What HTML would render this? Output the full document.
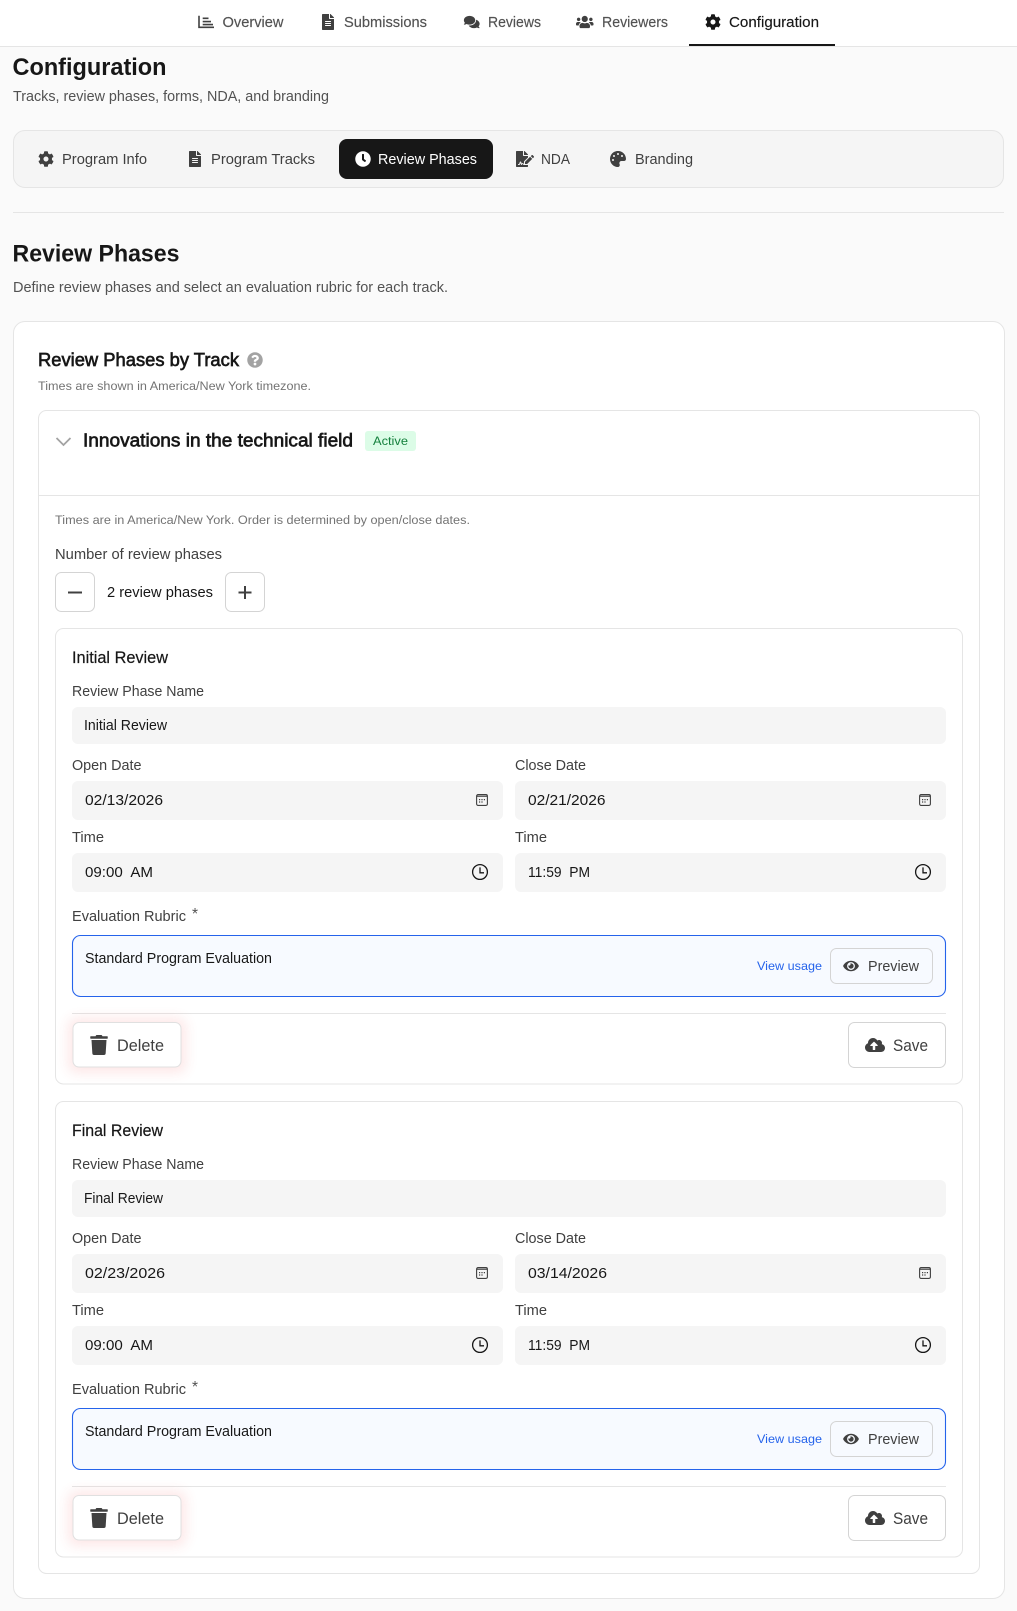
<!DOCTYPE html>
<html lang="en"><head><meta charset="utf-8"><title>Configuration</title>
<style>
html,body{margin:0;padding:0;background:#fafafa;width:1017px;height:1611px;overflow:hidden}
svg{display:block}
text{font-family:"Liberation Sans",Arial,sans-serif;font-size:14.4px;fill:#404040;white-space:pre}
.nav{fill:#525252;stroke:#525252;stroke-width:.15}
.dark{fill:#171717}
.h1{font-size:24.5px;font-weight:700;fill:#171717}
.sub{fill:#525252}
.small{font-size:12.3px;fill:#737373}
.h3{font-size:18.4px;fill:#171717;stroke:#171717;stroke-width:.65}
.ph{font-size:16.4px;fill:#171717;stroke:#171717;stroke-width:.2}
.btn{font-size:16.4px;fill:#404040}
.ic{fill:#404040}
.box{fill:#f5f5f5}
.line{stroke:#e5e5e5;stroke-width:1}
.bd{fill:#fff;stroke:#e5e5e5;stroke-width:1}
.btnb{fill:#fff;stroke:#d4d4d4;stroke-width:1}
.glow{fill:#ef4444;opacity:.12;filter:blur(6px)}
</style></head><body>
<svg width="1017" height="1611" viewBox="0 0 1017 1611" xmlns="http://www.w3.org/2000/svg">
<defs>
<path id="gear" d="M487.4 315.7l-42.6-24.6c4.3-23.2 4.3-47 0-70.2l42.6-24.6c4.9-2.8 7.1-8.6 5.5-14-11.1-35.6-30-67.8-54.7-94.6-3.8-4.1-10-5.1-14.8-2.3L380.8 110c-17.9-15.4-38.5-27.3-60.8-35.1V25.8c0-5.6-3.9-10.5-9.4-11.7-36.7-8.2-74.3-7.8-109.2 0-5.5 1.2-9.4 6.1-9.4 11.7V75c-22.2 7.9-42.8 19.8-60.8 35.1L88.7 85.5c-4.9-2.8-11-1.9-14.8 2.3-24.7 26.7-43.6 58.9-54.7 94.6-1.7 5.4.6 11.2 5.5 14L67.3 221c-4.3 23.2-4.3 47 0 70.2l-42.6 24.6c-4.9 2.8-7.1 8.6-5.5 14 11.1 35.6 30 67.8 54.7 94.6 3.8 4.1 10 5.1 14.8 2.3l42.6-24.6c17.9 15.4 38.5 27.3 60.8 35.1v49.2c0 5.6 3.9 10.5 9.4 11.7 36.7 8.2 74.3 7.8 109.2 0 5.5-1.2 9.4-6.1 9.4-11.7v-49.2c22.2-7.9 42.8-19.8 60.8-35.1l42.6 24.6c4.9 2.8 11 1.9 14.8-2.3 24.7-26.7 43.6-58.9 54.7-94.6 1.5-5.5-.7-11.3-5.6-14.1zM256 336c-44.1 0-80-35.9-80-80s35.9-80 80-80 80 35.9 80 80-35.9 80-80 80z"/>
<path id="file" d="M224 136V0H24C10.7 0 0 10.7 0 24v464c0 13.3 10.7 24 24 24h336c13.3 0 24-10.7 24-24V160H248c-13.2 0-24-10.8-24-24zm64 236c0 6.6-5.4 12-12 12H108c-6.6 0-12-5.4-12-12v-8c0-6.6 5.4-12 12-12h168c6.6 0 12 5.4 12 12v8zm0-64c0 6.6-5.4 12-12 12H108c-6.6 0-12-5.4-12-12v-8c0-6.6 5.4-12 12-12h168c6.6 0 12 5.4 12 12v8zm0-72v8c0 6.6-5.4 12-12 12H108c-6.6 0-12-5.4-12-12v-8c0-6.6 5.4-12 12-12h168c6.6 0 12 5.4 12 12zm96-114.1v6.1H256V0h6.1c6.4 0 12.5 2.5 17 7l97.9 98c4.5 4.5 7 10.6 7 16.9z"/>
<path id="trash" d="M432 32H312l-9.4-18.7A24 24 0 0 0 281.1 0H166.8a23.72 23.72 0 0 0-21.4 13.3L136 32H16A16 16 0 0 0 0 48v32a16 16 0 0 0 16 16h416a16 16 0 0 0 16-16V48a16 16 0 0 0-16-16zM53.2 467a48 48 0 0 0 47.9 45h245.8a48 48 0 0 0 47.9-45L416 128H32z"/>
<path id="eye" d="M572.52 241.4C518.29 135.59 410.93 64 288 64S57.68 135.64 3.48 241.41a32.35 32.35 0 0 0 0 29.19C57.71 376.41 165.07 448 288 448s230.32-71.64 284.52-177.41a32.35 32.35 0 0 0 0-29.19zM288 400a144 144 0 1 1 144-144 143.93 143.93 0 0 1-144 144zm0-240a95.31 95.31 0 0 0-25.31 3.79 47.85 47.85 0 0 1-66.9 66.9A95.78 95.78 0 1 0 288 160z"/>
<path id="cloud" d="M537.6 226.6c4.1-10.7 6.4-22.4 6.4-34.6 0-53-43-96-96-96-19.7 0-38.1 6-53.3 16.2C367 64.2 315.3 32 256 32c-88.4 0-160 71.6-160 160 0 2.7.1 5.4.2 8.1C40.2 219.8 0 273.2 0 336c0 79.5 64.5 144 144 144h368c70.7 0 128-57.3 128-128 0-61.9-44-113.6-102.4-125.4zM393.4 288H328v112c0 8.8-7.2 16-16 16h-48c-8.8 0-16-7.2-16-16V288h-65.4c-14.3 0-21.4-17.2-11.3-27.3l105.4-105.4c6.2-6.2 16.4-6.2 22.6 0l105.4 105.4c10.1 10.1 2.9 27.3-11.3 27.3z"/>
<g id="cal"><rect x="0.6" y="0.6" width="10.8" height="10.8" rx="1.5" fill="none" stroke="#404040" stroke-width="1.1"/><rect x="1" y="1.6" width="10" height="1.2" fill="#404040"/><path d="M3 5h1.2v1.2H3zM5.4 5h1.2v1.2H5.4zM7.8 5h1.2v1.2H7.8zM3 7.4h1.2v1.2H3zM5.4 7.4h1.2v1.2H5.4z" fill="#404040"/></g>
<g id="clk"><circle cx="0" cy="0" r="7.4" fill="none" stroke="#171717" stroke-width="1.3"/><path d="M0-4.6V.8H4" fill="none" stroke="#171717" stroke-width="1.3"/></g>
</defs>

<!-- top nav -->
<rect width="1017" height="46" fill="#fff"/>
<line x1="0" x2="1017" y1="46.5" y2="46.5" class="line"/>
<rect x="689" y="44" width="146" height="2" fill="#171717"/>
<path d="M199 15.7V27.3H214M202.7 18.3H208.5M202.7 21.6H211M202.7 24.6H213" fill="none" stroke="#404040" stroke-width="1.6"/>
<text class="nav" x="222.5" y="27" textLength="61" lengthAdjust="spacingAndGlyphs">Overview</text>
<svg x="322" y="14" width="12" height="16" viewBox="0 0 384 512"><use href="#file" class="ic"/></svg>
<text class="nav" x="344" y="27" textLength="83" lengthAdjust="spacingAndGlyphs">Submissions</text>
<svg x="463" y="15" width="17.5" height="14" viewBox="0 0 576 512"><path class="ic" d="M416 192c0-88.4-93.1-160-208-160S0 103.6 0 192c0 34.3 14.1 65.9 38 92-13.4 30.2-35.5 54.2-35.8 54.5-2.2 2.3-2.8 5.7-1.5 8.7S4.8 352 8 352c36.6 0 66.9-12.3 88.7-25 32.2 15.7 70.3 25 111.3 25 114.9 0 208-71.6 208-160zm122 220c23.9-26 38-57.7 38-92 0-66.9-53.5-124.2-129.3-148.1.9 6.6 1.3 13.3 1.3 20.1 0 105.9-107.7 192-240 192-10.8 0-21.3-.8-31.7-1.9C207.8 439.6 281.8 480 368 480c41 0 79.1-9.2 111.3-25 21.8 12.7 52.1 25 88.7 25 3.2 0 6.1-1.9 7.3-4.8 1.3-2.9.7-6.3-1.5-8.7-.3-.3-22.4-24.2-35.8-54.5z"/></svg>
<text class="nav" x="488" y="27" textLength="53" lengthAdjust="spacingAndGlyphs">Reviews</text>
<svg x="576" y="15" width="17.5" height="14" viewBox="0 0 640 512"><path class="ic" d="M96 224c35.3 0 64-28.7 64-64s-28.7-64-64-64-64 28.7-64 64 28.7 64 64 64zm448 0c35.3 0 64-28.7 64-64s-28.7-64-64-64-64 28.7-64 64 28.7 64 64 64zm32 32h-64c-17.6 0-33.5 7.1-45.1 18.6 40.3 22.1 68.9 62 75.1 109.4h66c17.7 0 32-14.3 32-32v-32c0-35.3-28.7-64-64-64zm-256 0c61.9 0 112-50.1 112-112S381.9 32 320 32 208 82.1 208 144s50.1 112 112 112zm76.8 32h-8.3c-20.8 10-43.9 16-68.5 16s-47.6-6-68.5-16h-8.3C179.6 288 128 339.6 128 403.2V432c0 26.5 21.5 48 48 48h288c26.5 0 48-21.5 48-48v-28.8c0-63.6-51.6-115.2-115.2-115.2zm-223.7-13.4C161.5 263.1 145.6 256 128 256H64c-35.3 0-64 28.7-64 64v32c0 17.7 14.3 32 32 32h65.9c6.3-47.4 34.9-87.3 75.2-109.4z"/></svg>
<text class="nav" x="602" y="27" textLength="66" lengthAdjust="spacingAndGlyphs">Reviewers</text>
<svg x="705" y="14" width="16" height="16" viewBox="0 0 512 512"><use href="#gear" fill="#171717"/></svg>
<text class="nav" style="fill:#171717;stroke:#171717" x="729" y="27" textLength="90" lengthAdjust="spacingAndGlyphs">Configuration</text>

<!-- page head -->
<text class="h1" x="12.5" y="75" textLength="154" lengthAdjust="spacingAndGlyphs">Configuration</text>
<text class="sub" x="13" y="101" textLength="316" lengthAdjust="spacingAndGlyphs">Tracks, review phases, forms, NDA, and branding</text>

<!-- tabs -->
<rect x="13.5" y="130.5" width="990" height="57" rx="11.5" fill="#f5f5f5" stroke="#e5e5e5"/>
<rect x="339" y="139" width="154" height="40" rx="8" fill="#171717"/>
<svg x="38" y="151" width="16" height="16" viewBox="0 0 512 512"><use href="#gear" class="ic"/></svg>
<text x="62" y="164" textLength="85" lengthAdjust="spacingAndGlyphs">Program Info</text>
<svg x="189" y="151" width="12" height="16" viewBox="0 0 384 512"><use href="#file" class="ic"/></svg>
<text x="211" y="164" textLength="104" lengthAdjust="spacingAndGlyphs">Program Tracks</text>
<svg x="355" y="151" width="16" height="16" viewBox="0 0 512 512"><path fill="#fff" d="M256,8C119,8,8,119,8,256S119,504,256,504,504,393,504,256,393,8,256,8Zm92.49,313h0l-20,25a16,16,0,0,1-22.49,2.5h0l-67-49.72a40,40,0,0,1-15-31.23V112a16,16,0,0,1,16-16h32a16,16,0,0,1,16,16V256l58,42.5A16,16,0,0,1,348.49,321Z"/></svg>
<text style="fill:#fff" x="378" y="164" textLength="99" lengthAdjust="spacingAndGlyphs">Review Phases</text>
<svg x="516" y="151" width="18" height="16" viewBox="0 0 576 512"><path class="ic" d="M218.17 424.14c-2.95-5.92-8.09-6.52-10.17-6.52s-7.22.59-10.02 6.19l-7.67 15.34c-6.37 12.78-25.03 11.37-29.48-2.09L144 386.59l-10.61 31.88c-5.89 17.66-22.38 29.53-41 29.53H80c-8.84 0-16-7.16-16-16s7.16-16 16-16h12.39c4.83 0 9.11-3.08 10.64-7.66l18.19-54.64c3.3-9.81 12.44-16.41 22.78-16.41s19.48 6.59 22.77 16.41l13.88 41.64c19.75-16.19 54.06-9.7 66 14.16 1.89 3.78 5.49 5.95 9.36 6.26v-82.12l128-127.09V160H248c-13.2 0-24-10.8-24-24V0H24C10.7 0 0 10.7 0 24v464c0 13.3 10.7 24 24 24h336c13.3 0 24-10.7 24-24v-40l-128-.11c-16.12-.31-30.58-9.28-37.83-23.75zM384 121.9c0-6.3-2.5-12.4-7-16.9L279.1 7c-4.5-4.5-10.6-7-17-7H256v128h128v-6.1zm-96 225.06V416h68.99l161.68-162.78-67.88-67.88L288 346.96zm280.54-179.63l-31.87-31.87c-9.94-9.94-26.07-9.94-36.01 0l-27.25 27.25 67.88 67.88 27.25-27.25c9.95-9.94 9.95-26.07 0-36.01z"/></svg>
<text x="541" y="164" textLength="29" lengthAdjust="spacingAndGlyphs">NDA</text>
<svg x="610" y="151" width="16" height="16" viewBox="0 0 512 512"><path class="ic" d="M204.3 5C104.9 24.4 24.8 104.3 5.2 203.4c-37 187 131.7 326.4 258.8 306.7 41.2-6.4 61.4-54.6 42.5-91.7-23.1-45.4 9.9-98.4 60.9-98.4h79.7c35.8 0 64.8-29.6 64.9-65.3C511.5 97.1 368.1-26.9 204.3 5zM96 320c-17.7 0-32-14.3-32-32s14.3-32 32-32 32 14.3 32 32-14.3 32-32 32zm32-128c-17.7 0-32-14.3-32-32s14.3-32 32-32 32 14.3 32 32-14.3 32-32 32zm128-64c-17.7 0-32-14.3-32-32s14.3-32 32-32 32 14.3 32 32-14.3 32-32 32zm128 64c-17.7 0-32-14.3-32-32s14.3-32 32-32 32 14.3 32 32-14.3 32-32 32z"/></svg>
<text x="635" y="164" textLength="58" lengthAdjust="spacingAndGlyphs">Branding</text>

<line x1="13" x2="1004" y1="212.5" y2="212.5" class="line"/>

<text class="h1" x="12.5" y="261.5" textLength="167" lengthAdjust="spacingAndGlyphs">Review Phases</text>
<text class="sub" x="13" y="292" textLength="435" lengthAdjust="spacingAndGlyphs">Define review phases and select an evaluation rubric for each track.</text>

<!-- main card -->
<rect x="13.5" y="321.5" width="991" height="1277" rx="11.5" class="bd"/>
<text class="h3" x="38" y="366" textLength="201" lengthAdjust="spacingAndGlyphs">Review Phases by Track</text>
<svg x="247" y="352" width="16" height="16" viewBox="0 0 512 512"><path fill="#a3a3a3" d="M504 256c0 136.997-111.043 248-248 248S8 392.997 8 256C8 119.083 119.043 8 256 8s248 111.083 248 248zM262.655 90c-54.497 0-89.255 22.957-116.549 63.758-3.536 5.286-2.353 12.415 2.715 16.258l34.699 26.31c5.205 3.947 12.621 3.008 16.665-2.122 17.864-22.658 30.113-35.797 57.303-35.797 20.429 0 45.698 13.148 45.698 32.958 0 14.976-12.363 22.667-32.534 33.976C247.128 238.528 216 254.941 216 296v4c0 6.627 5.373 12 12 12h56c6.627 0 12-5.373 12-12v-1.333c0-28.462 83.186-29.647 83.186-106.667 0-58.002-60.165-102-116.531-102zM256 338c-25.365 0-46 20.635-46 46 0 25.364 20.635 46 46 46s46-20.636 46-46c0-25.365-20.635-46-46-46z"/></svg>
<text class="small" x="38" y="390" textLength="273" lengthAdjust="spacingAndGlyphs">Times are shown in America/New York timezone.</text>

<!-- track box -->
<rect x="38.5" y="410.5" width="941" height="1163" rx="8" class="bd"/>
<path d="M56.5 438L63.5 445L70.5 438" fill="none" stroke="#a3a3a3" stroke-width="1.8"/>
<text class="h3" x="83" y="446.5" textLength="270" lengthAdjust="spacingAndGlyphs">Innovations in the technical field</text>
<rect x="365" y="431" width="51" height="20" rx="3" fill="#dcfce7"/>
<text style="font-size:12.3px;fill:#15803d" x="373" y="445" textLength="35" lengthAdjust="spacingAndGlyphs">Active</text>
<line x1="39" x2="979" y1="495.5" y2="495.5" class="line"/>
<text class="small" x="55" y="524" textLength="415" lengthAdjust="spacingAndGlyphs">Times are in America/New York. Order is determined by open/close dates.</text>
<text x="55" y="559" textLength="167" lengthAdjust="spacingAndGlyphs">Number of review phases</text>
<rect x="55.5" y="572.5" width="39" height="39" rx="6" class="btnb"/>
<path d="M68 592.5H82" stroke="#404040" stroke-width="2"/>
<text class="dark" x="107" y="597" textLength="106" lengthAdjust="spacingAndGlyphs">2 review phases</text>
<rect x="225.5" y="572.5" width="39" height="39" rx="6" class="btnb"/>
<path d="M238.5 592.5H251.5M245 586V599" stroke="#404040" stroke-width="2"/>

<!-- phase 1 -->
<g>
<rect x="55.5" y="628.5" width="907" height="455.5" rx="8" class="bd"/>
<text class="ph" x="72" y="663" textLength="96" lengthAdjust="spacingAndGlyphs">Initial Review</text>
<text x="72" y="696" textLength="132" lengthAdjust="spacingAndGlyphs">Review Phase Name</text>
<rect x="72" y="707" width="874" height="37" rx="6" class="box"/>
<text class="dark" x="84" y="730" textLength="83" lengthAdjust="spacingAndGlyphs">Initial Review</text>
<text x="72" y="770" textLength="69.5" lengthAdjust="spacingAndGlyphs">Open Date</text>
<rect x="72" y="781" width="431" height="39" rx="6" class="box"/>
<text class="dark" x="85" y="805" textLength="78" lengthAdjust="spacingAndGlyphs">02/13/2026</text>
<use href="#cal" x="476" y="794"/>
<text x="515" y="770" textLength="71" lengthAdjust="spacingAndGlyphs">Close Date</text>
<rect x="515" y="781" width="431" height="39" rx="6" class="box"/>
<text class="dark" x="528" y="805" textLength="77.5" lengthAdjust="spacingAndGlyphs">02/21/2026</text>
<use href="#cal" x="919" y="794"/>
<text x="72" y="842" textLength="32" lengthAdjust="spacingAndGlyphs">Time</text>
<rect x="72" y="853" width="431" height="39" rx="6" class="box"/>
<text class="dark" x="85" y="877" textLength="68" lengthAdjust="spacingAndGlyphs">09:00  AM</text>
<use href="#clk" x="480" y="872"/>
<text x="515" y="842" textLength="32" lengthAdjust="spacingAndGlyphs">Time</text>
<rect x="515" y="853" width="431" height="39" rx="6" class="box"/>
<text class="dark" x="528" y="877" textLength="62" lengthAdjust="spacingAndGlyphs">11:59  PM</text>
<use href="#clk" x="923" y="872"/>
<text x="72" y="921" textLength="114" lengthAdjust="spacingAndGlyphs">Evaluation Rubric</text>
<text style="fill:#525252;font-size:15.5px" x="192" y="919">*</text>
<rect x="72.5" y="935.5" width="873" height="61" rx="8" fill="#f7faff" stroke="#2563eb" stroke-width="1.1"/>
<text class="dark" x="85" y="963" textLength="187" lengthAdjust="spacingAndGlyphs">Standard Program Evaluation</text>
<text style="font-size:12.3px;fill:#2563eb" x="757" y="970" textLength="65" lengthAdjust="spacingAndGlyphs">View usage</text>
<rect x="830.5" y="948.5" width="102" height="35" rx="6" fill="#f7faff" stroke="#d4d4d4"/>
<svg x="843" y="959" width="16" height="14" viewBox="0 0 576 512"><use href="#eye" class="ic"/></svg>
<text x="868" y="971" textLength="51" lengthAdjust="spacingAndGlyphs">Preview</text>
<line x1="72" x2="946" y1="1013.5" y2="1013.5" class="line"/>
<rect x="68" y="1018" width="118" height="55" rx="8" class="glow"/>
<rect x="73" y="1022.5" width="108" height="44.5" rx="6" fill="#fff" stroke="#e0e0e0"/>
<svg x="90" y="1035" width="18" height="20" viewBox="0 0 448 512"><use href="#trash" class="ic"/></svg>
<text class="btn" x="117" y="1051" textLength="47" lengthAdjust="spacingAndGlyphs">Delete</text>
<rect x="848.5" y="1022.5" width="97" height="45" rx="6" class="btnb"/>
<svg x="865" y="1037" width="20" height="16" viewBox="0 0 640 512"><use href="#cloud" class="ic"/></svg>
<text class="btn" x="893" y="1051" textLength="35" lengthAdjust="spacingAndGlyphs">Save</text>
</g>

<!-- phase 2 -->
<g transform="translate(0,473)">
<rect x="55.5" y="628.5" width="907" height="455.5" rx="8" class="bd"/>
<text class="ph" x="72" y="663" textLength="91" lengthAdjust="spacingAndGlyphs">Final Review</text>
<text x="72" y="696" textLength="132" lengthAdjust="spacingAndGlyphs">Review Phase Name</text>
<rect x="72" y="707" width="874" height="37" rx="6" class="box"/>
<text class="dark" x="84" y="730" textLength="79" lengthAdjust="spacingAndGlyphs">Final Review</text>
<text x="72" y="770" textLength="69.5" lengthAdjust="spacingAndGlyphs">Open Date</text>
<rect x="72" y="781" width="431" height="39" rx="6" class="box"/>
<text class="dark" x="85" y="805" textLength="80" lengthAdjust="spacingAndGlyphs">02/23/2026</text>
<use href="#cal" x="476" y="794"/>
<text x="515" y="770" textLength="71" lengthAdjust="spacingAndGlyphs">Close Date</text>
<rect x="515" y="781" width="431" height="39" rx="6" class="box"/>
<text class="dark" x="528" y="805" textLength="79" lengthAdjust="spacingAndGlyphs">03/14/2026</text>
<use href="#cal" x="919" y="794"/>
<text x="72" y="842" textLength="32" lengthAdjust="spacingAndGlyphs">Time</text>
<rect x="72" y="853" width="431" height="39" rx="6" class="box"/>
<text class="dark" x="85" y="877" textLength="68" lengthAdjust="spacingAndGlyphs">09:00  AM</text>
<use href="#clk" x="480" y="872"/>
<text x="515" y="842" textLength="32" lengthAdjust="spacingAndGlyphs">Time</text>
<rect x="515" y="853" width="431" height="39" rx="6" class="box"/>
<text class="dark" x="528" y="877" textLength="62" lengthAdjust="spacingAndGlyphs">11:59  PM</text>
<use href="#clk" x="923" y="872"/>
<text x="72" y="921" textLength="114" lengthAdjust="spacingAndGlyphs">Evaluation Rubric</text>
<text style="fill:#525252;font-size:15.5px" x="192" y="919">*</text>
<rect x="72.5" y="935.5" width="873" height="61" rx="8" fill="#f7faff" stroke="#2563eb" stroke-width="1.1"/>
<text class="dark" x="85" y="963" textLength="187" lengthAdjust="spacingAndGlyphs">Standard Program Evaluation</text>
<text style="font-size:12.3px;fill:#2563eb" x="757" y="970" textLength="65" lengthAdjust="spacingAndGlyphs">View usage</text>
<rect x="830.5" y="948.5" width="102" height="35" rx="6" fill="#f7faff" stroke="#d4d4d4"/>
<svg x="843" y="959" width="16" height="14" viewBox="0 0 576 512"><use href="#eye" class="ic"/></svg>
<text x="868" y="971" textLength="51" lengthAdjust="spacingAndGlyphs">Preview</text>
<line x1="72" x2="946" y1="1013.5" y2="1013.5" class="line"/>
<rect x="68" y="1018" width="118" height="55" rx="8" class="glow"/>
<rect x="73" y="1022.5" width="108" height="44.5" rx="6" fill="#fff" stroke="#e0e0e0"/>
<svg x="90" y="1035" width="18" height="20" viewBox="0 0 448 512"><use href="#trash" class="ic"/></svg>
<text class="btn" x="117" y="1051" textLength="47" lengthAdjust="spacingAndGlyphs">Delete</text>
<rect x="848.5" y="1022.5" width="97" height="45" rx="6" class="btnb"/>
<svg x="865" y="1037" width="20" height="16" viewBox="0 0 640 512"><use href="#cloud" class="ic"/></svg>
<text class="btn" x="893" y="1051" textLength="35" lengthAdjust="spacingAndGlyphs">Save</text>
</g>
</svg>
</body></html>
